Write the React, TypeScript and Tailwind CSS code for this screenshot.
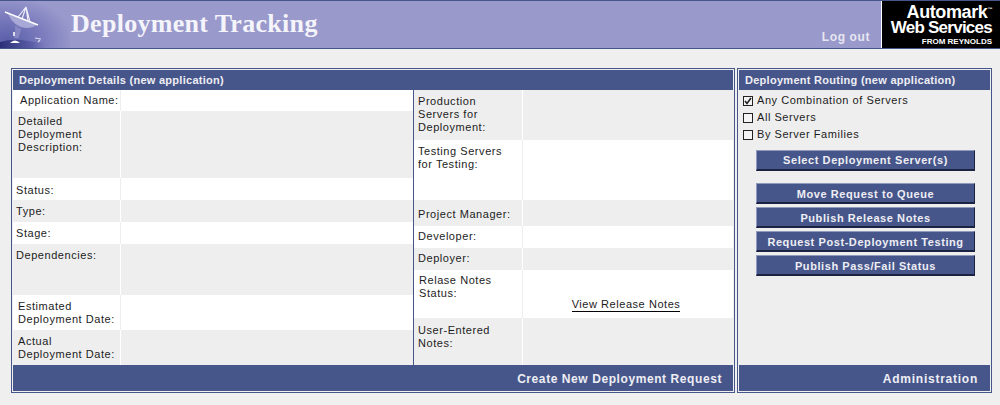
import React from 'react';

type RowProps = {
  label: string[];
  h: string;
  shade: boolean;
  pad?: string;
  labelW: string;
  children?: React.ReactNode;
};

function Row({ label, h, shade, pad = 'pl-[3px] pt-[5px]', labelW, children }: RowProps) {
  return (
    <div className={`flex ${h} ${shade ? 'bg-[#eeeeee]' : 'bg-white'}`}>
      <div className={`${labelW} shrink-0 ${pad} leading-[13px] whitespace-nowrap`}>
        {label.map(line => (
          <div key={line}>{line}</div>
        ))}
      </div>
      <div className={`flex-1 border-l ${shade ? 'border-white' : 'border-[#eeeeee]'}`}>{children}</div>
    </div>
  );
}

function DishLogo() {
  return (
    <svg width="70" height="47" viewBox="0 0 70 47" className="block shrink-0">
      <defs>
        <radialGradient id="sky" cx="0.1" cy="0.85" r="0.95">
          <stop offset="0" stopColor="#5a5fa8" />
          <stop offset="0.55" stopColor="#7c7cbe" />
          <stop offset="1" stopColor="#9999cc" />
        </radialGradient>
        <linearGradient id="ground" x1="0" x2="1" y1="0" y2="0">
          <stop offset="0" stopColor="#2a2f78" />
          <stop offset="0.6" stopColor="#5a5fa8" />
          <stop offset="1" stopColor="#8c8cc6" stopOpacity="0" />
        </linearGradient>
      </defs>
      <rect width="70" height="47" fill="url(#sky)" />
      <path d="M0 41 Q14 37 28 40 T50 41 L54 47 L0 47Z" fill="url(#ground)" />
      <path d="M8 13 Q14 26 26 27 Q34 27 37 23Z" fill="#a9a9d8" />
      <path d="M5 11 L38 24" stroke="#ffffff" strokeWidth="1.4" />
      <path d="M18 16 L26 6 M22 18 L26 6 L28 20 M26 6 L30 21" stroke="#f0f0fa" strokeWidth="1.1" fill="none" />
      <path d="M16 25 Q18 31 15 37 M20 27 L17 37" stroke="#8686c2" strokeWidth="3" fill="none" />
      <rect x="13" y="31" width="2" height="4" fill="#dcdcf0" />
      <path d="M10 42 Q15 37 20 42Z" fill="#ffffff" />
      <path d="M35 37 L41 38 M38 41 L40 39" stroke="#dcdcf0" strokeWidth="1.2" />
    </svg>
  );
}

function Option({ label, checked }: { label: string; checked?: boolean }) {
  return (
    <div className="flex h-[17px] items-center gap-[4px]">
      <div className="flex h-[10px] w-[10px] items-center justify-center border border-[#222222] bg-[#f4f4f4]">
        {checked && (
          <svg width="8" height="8" viewBox="0 0 8 8">
            <path d="M1 4 L3 6.5 L7 1" stroke="#222222" strokeWidth="1.6" fill="none" />
          </svg>
        )}
      </div>
      <span>{label}</span>
    </div>
  );
}

function ActionButton({ label, low }: { label: string; low?: boolean }) {
  return (
    <button className={`flex h-[21px] w-[219px] items-center justify-center border-t border-l border-t-[#8f9abd] border-l-[#8f9abd] border-b-2 border-r border-b-[#1c2340] border-r-[#1c2340] bg-[#47568a] text-[11px] font-bold tracking-[0.58px] text-[#eeeef4] ${low ? 'pt-[3px]' : 'pt-px'}`}>
      {label}
    </button>
  );
}

export default function App() {
  const leftW = 'w-[107px]';
  const rightW = 'w-[108px]';
  return (
    <div className="h-[405px] w-[1000px] overflow-hidden bg-[#efefef] font-['Liberation_Sans',Arial,sans-serif] text-[11px] tracking-[0.55px] text-[#1c1c1c]">
      <header className="flex h-[49px] items-stretch border-y border-[#47568a] bg-[#9999cc]">
        <DishLogo />
        <h1 className="flex-1 pl-px pt-[8px] font-['Liberation_Serif',serif] text-[26px] leading-[30px] font-bold tracking-[0.3px] text-[#f4f4fa]">
          Deployment Tracking
        </h1>
        <div className="self-end pr-[11px] pb-[4px] text-[12px] leading-[14px] font-bold tracking-[0.6px] text-[#e6e6f0]">Log out</div>
        <div className="flex w-[119px] flex-col items-end border-l border-white bg-black pr-[8px] pt-[3px] font-bold tracking-normal whitespace-nowrap text-white">
          <div className="text-[18px] leading-[16px] tracking-[-0.4px]">
            Automark<span className="align-super text-[5px] leading-[0]">™</span>
          </div>
          <div className="text-[17px] leading-[16px] tracking-[-0.75px]">Web Services</div>
          <div className="mt-px text-[8px] leading-[9px]">FROM REYNOLDS</div>
        </div>
      </header>

      <main className="flex gap-[2px] pl-[11px] pt-[19px]">
        <section className="w-[724px] border border-[#47568a] p-px">
          <div className="flex h-[20px] items-center bg-[#47568a] pl-[6px] font-bold tracking-[0.28px] text-[#eeeef4]">Deployment Details (new application)</div>
          <div className="flex h-[275px]">
            <div className="w-[400px]">
              <Row label={['Application Name:']} h="h-[21px]" shade={false} labelW={leftW} pad="pl-[7px] pt-[4px]" />
              <Row label={['Detailed', 'Deployment', 'Description:']} h="h-[67px]" shade labelW={leftW} pad="pl-[5px] pt-[4px]" />
              <Row label={['Status:']} h="h-[22px]" shade={false} labelW={leftW} pad="pl-[3px] pt-[6px]" />
              <Row label={['Type:']} h="h-[22px]" shade labelW={leftW} />
              <Row label={['Stage:']} h="h-[22px]" shade={false} labelW={leftW} />
              <Row label={['Dependencies:']} h="h-[51px]" shade labelW={leftW} />
              <Row label={['Estimated', 'Deployment Date:']} h="h-[35px]" shade={false} labelW={leftW} pad="pl-[5px] pt-[5px]" />
              <Row label={['Actual', 'Deployment Date:']} h="h-[35px]" shade labelW={leftW} pad="pl-[5px] pt-[5px]" />
            </div>
            <div className="flex-1 border-l border-[#47568a]">
              <Row label={['Production', 'Servers for', 'Deployment:']} h="h-[50px]" shade labelW={rightW} pad="pl-[4px] pt-[5px]" />
              <Row label={['Testing Servers', 'for Testing:']} h="h-[60px]" shade={false} labelW={rightW} pad="pl-[4px] pt-[5px]" />
              <Row label={['Project Manager:']} h="h-[26px]" shade labelW={rightW} pad="pl-[4px] pt-[8px]" />
              <Row label={['Developer:']} h="h-[22px]" shade={false} labelW={rightW} pad="pl-[4px] pt-[4px]" />
              <Row label={['Deployer:']} h="h-[22px]" shade labelW={rightW} pad="pl-[4px] pt-[4px]" />
              <Row label={['Relase Notes', 'Status:']} h="h-[48px]" shade={false} labelW={rightW} pad="pl-[5px] pt-[4px]">
                <div className="pt-[28px] pr-[4px] text-center leading-[13px]">
                  <span className="border-b border-black pb-px">View Release Notes</span>
                </div>
              </Row>
              <Row label={['User-Entered', 'Notes:']} h="h-[47px]" shade labelW={rightW} pad="pl-[4px] pt-[6px]" />
            </div>
          </div>
          <div className="flex h-[26px] items-center justify-end bg-[#47568a] pr-[11px] pt-[2px] text-[12px] font-bold tracking-[0.58px] text-[#eeeef4]">
            Create New Deployment Request
          </div>
        </section>

        <section className="flex w-[255px] flex-col border border-[#47568a] p-px">
          <div className="flex h-[20px] items-center bg-[#47568a] pl-[6px] font-bold tracking-[0.28px] text-[#eeeef4]">Deployment Routing (new application)</div>
          <div className="h-[275px] bg-[#eeeeee]">
            <div className="pl-[4px] pt-[2px]">
              <Option label="Any Combination of Servers" checked />
              <Option label="All Servers" />
              <Option label="By Server Families" />
            </div>
            <div className="flex flex-col items-center pl-[2px] pt-[7px]">
              <ActionButton label="Select Deployment Server(s)" />
              <div className="mt-[12px] flex flex-col gap-[3px]">
                <ActionButton label="Move Request to Queue" low />
                <ActionButton label="Publish Release Notes" low />
                <ActionButton label="Request Post-Deployment Testing" low />
                <ActionButton label="Publish Pass/Fail Status" low />
              </div>
            </div>
          </div>
          <div className="flex h-[26px] items-center justify-end bg-[#47568a] pr-[12px] pt-[2px] text-[12px] font-bold tracking-[0.75px] text-[#eeeef4]">
            Administration
          </div>
        </section>
      </main>
    </div>
  );
}
